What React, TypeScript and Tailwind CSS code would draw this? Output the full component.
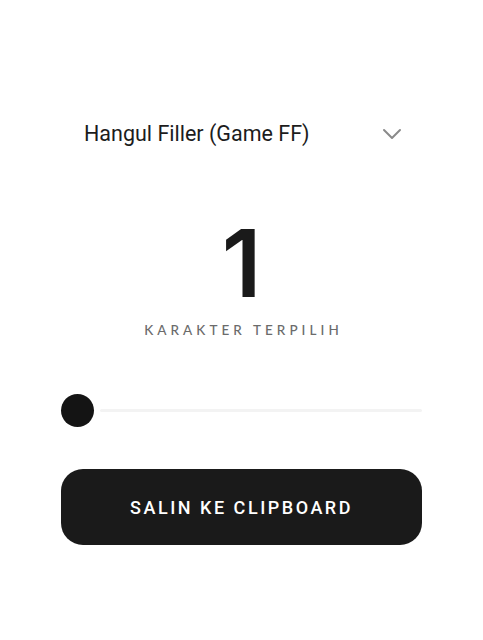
import { FC, useState } from 'react'

const Chevron: FC = () => (
  <svg width="20" height="12" viewBox="0 0 20 12" fill="none" stroke="#8a8a8a" strokeWidth="2" strokeLinecap="round" strokeLinejoin="round">
    <path d="M2 2l8 8 8-8" />
  </svg>
)

const App: FC = () => {
  const [count] = useState(1)

  return (
    <main className="min-h-screen w-full bg-white px-[61px] pt-[110px] font-['Roboto',sans-serif]">
      <div className="flex h-[48px] items-center justify-between pl-[23px] pr-[20px]">
        <span className="text-[21.5px] text-[#1c1c1c]">Hangul Filler (Game FF)</span>
        <Chevron />
      </div>

      <section className="mt-[58px] flex flex-col items-center">
        <div className="font-['Inter',sans-serif] text-[94px] font-semibold leading-[94px] text-[#1a1a1a]">{count}</div>
        <p className="mt-[10px] pl-[4px] font-['Lato',sans-serif] text-[13.5px] font-medium tracking-[0.3em] text-[#6b6b6b]">
          KARAKTER TERPILIH
        </p>
      </section>

      <div className="mt-[53px] flex h-[34px] items-center">
        <div className="h-[33px] w-[33px] shrink-0 rounded-full bg-[#141414]" />
        <div className="ml-[6px] h-[3px] flex-1 rounded-full bg-[#f3f3f3]" />
      </div>

      <button className="mt-[42px] flex h-[76px] w-full items-center justify-center rounded-[22px] bg-[#1a1a1a] text-[18px] font-medium tracking-[0.14em] text-white">
        SALIN KE CLIPBOARD
      </button>
    </main>
  )
}

export default App
